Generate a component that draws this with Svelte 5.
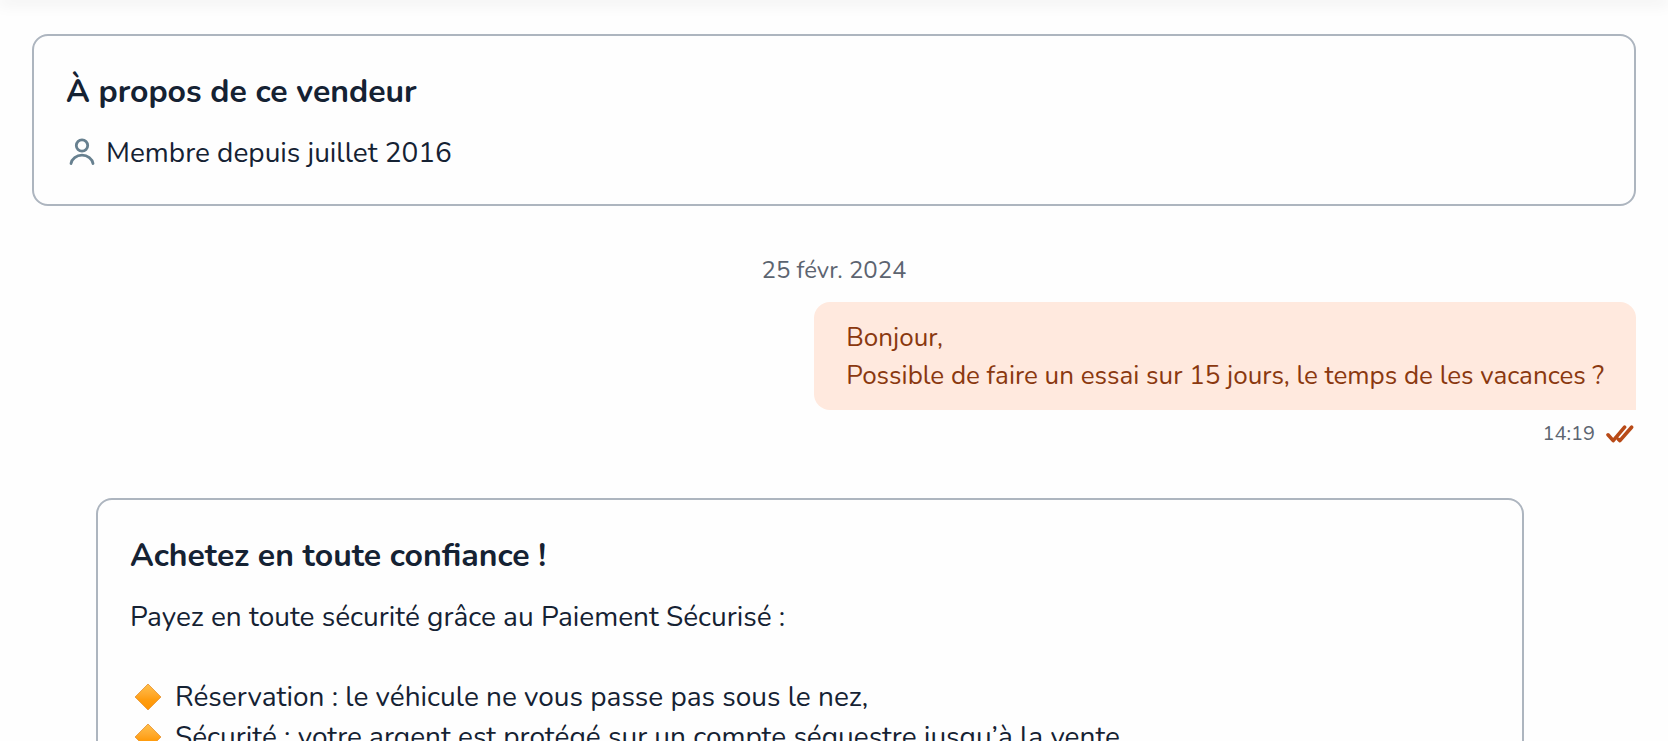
<script lang="ts">
	const seller = {
		title: 'À propos de ce vendeur',
		since: 'Membre depuis juillet 2016'
	};

	const message = {
		lines: ['Bonjour,', 'Possible de faire un essai sur 15 jours, le temps de les vacances ?'],
		time: '14:19'
	};

	const benefits = [
		'Réservation : le véhicule ne vous passe pas sous le nez,',
		'Sécurité : votre argent est protégé sur un compte séquestre jusqu’à la vente'
	];
</script>

<svelte:head>
	<title>Conversation</title>
</svelte:head>

<div class="page">
	<header class="topbar"></header>

	<main class="conversation">
		<section class="card">
			<h2>{seller.title}</h2>
			<p class="member">
				<svg class="user" viewBox="0 0 32 32" aria-hidden="true">
					<circle cx="16" cy="8.5" r="5.7" />
					<path d="M5 26.5a11.1 9.6 0 0 1 22 0" />
				</svg>
				{seller.since}
			</p>
		</section>

		<time class="date" datetime="2024-02-25">25 févr. 2024</time>

		<article class="message">
			<div class="bubble">
				{#each message.lines as line}
					<p>{line}</p>
				{/each}
			</div>
			<div class="status">
				<time datetime="14:19">{message.time}</time>
				<svg class="read" viewBox="0 0 28 20" role="img" aria-label="Lu">
					<path d="M2 10.8l5.2 5.8L18.6 3.2M12.6 15.4l1.3 1.2L25.6 3.2" />
				</svg>
			</div>
		</article>

		<section class="card trust">
			<h2>Achetez en toute confiance !</h2>
			<p>Payez en toute sécurité grâce au Paiement Sécurisé :</p>
			<ul>
				{#each benefits as benefit}
					<li>
						<svg class="diamond" viewBox="0 0 28 28" aria-hidden="true">
							<defs>
								<linearGradient id="amber" x1="0" y1="0" x2="0" y2="1">
									<stop offset="0" stop-color="#ffc04a" />
									<stop offset="0.4" stop-color="#ffa92c" />
									<stop offset="0.6" stop-color="#ff9d10" />
									<stop offset="1" stop-color="#ff9400" />
								</linearGradient>
							</defs>
							<path d="M14 1L27 14 14 27 1 14z" />
						</svg>
						<span>{benefit}</span>
					</li>
				{/each}
			</ul>
		</section>
	</main>
</div>

<style>
	:global(body) {
		margin: 0;
		background: #fefefe;
	}

	.page {
		height: 100vh;
		overflow: hidden;
		color: #152233;
		font-family: Nunito, Lato, sans-serif;
		font-size: 28px;
		line-height: 40px;
	}

	.topbar {
		height: 0;
		box-shadow: 0 0 16px 2px rgba(0, 0, 0, 0.14);
	}

	.conversation {
		display: flex;
		flex-direction: column;
		padding: 34px 32px;
	}

	h2,
	p,
	ul {
		margin: 0;
		padding: 0;
	}

	.card {
		padding: 32px 32px 31px;
		border: 2px solid #adb5bf;
		border-radius: 16px;
	}

	h2 {
		margin-bottom: 17px;
		font-size: 32px;
		font-weight: 700;
		line-height: 48px;
	}

	.member {
		display: flex;
		align-items: center;
		gap: 8px;
	}

	.user {
		width: 32px;
		height: 32px;
		fill: none;
		stroke: #67808f;
		stroke-width: 2.8;
		stroke-linecap: round;
	}

	.date {
		margin-top: 48px;
		color: #5c6470;
		font-size: 24px;
		line-height: 32px;
		text-align: center;
	}

	.message {
		display: flex;
		flex-direction: column;
		align-items: flex-end;
		margin-top: 16px;
	}

	.bubble {
		padding: 17px 32px 15px;
		border-radius: 16px 16px 0 16px;
		background: #ffe9de;
		color: #8a380f;
		font-size: 26px;
		line-height: 38px;
	}

	.status {
		display: flex;
		align-items: center;
		gap: 11px;
		margin-top: 8px;
		color: #5c6470;
		font-size: 20px;
		line-height: 32px;
	}

	.read {
		width: 28px;
		height: 20px;
		margin-right: 2px;
		fill: none;
		stroke: #b84a17;
		stroke-width: 3.6;
		stroke-linecap: round;
		stroke-linejoin: round;
	}

	.trust {
		margin: 48px 112px 0 64px;
	}

	ul {
		margin-top: 40px;
		list-style: none;
	}

	li {
		display: flex;
		align-items: center;
		gap: 13px;
	}

	.diamond {
		width: 28px;
		height: 28px;
		margin-left: 4px;
		fill: url(#amber);
		stroke: #eba047;
		stroke-width: 1;
		stroke-linejoin: round;
	}
</style>
